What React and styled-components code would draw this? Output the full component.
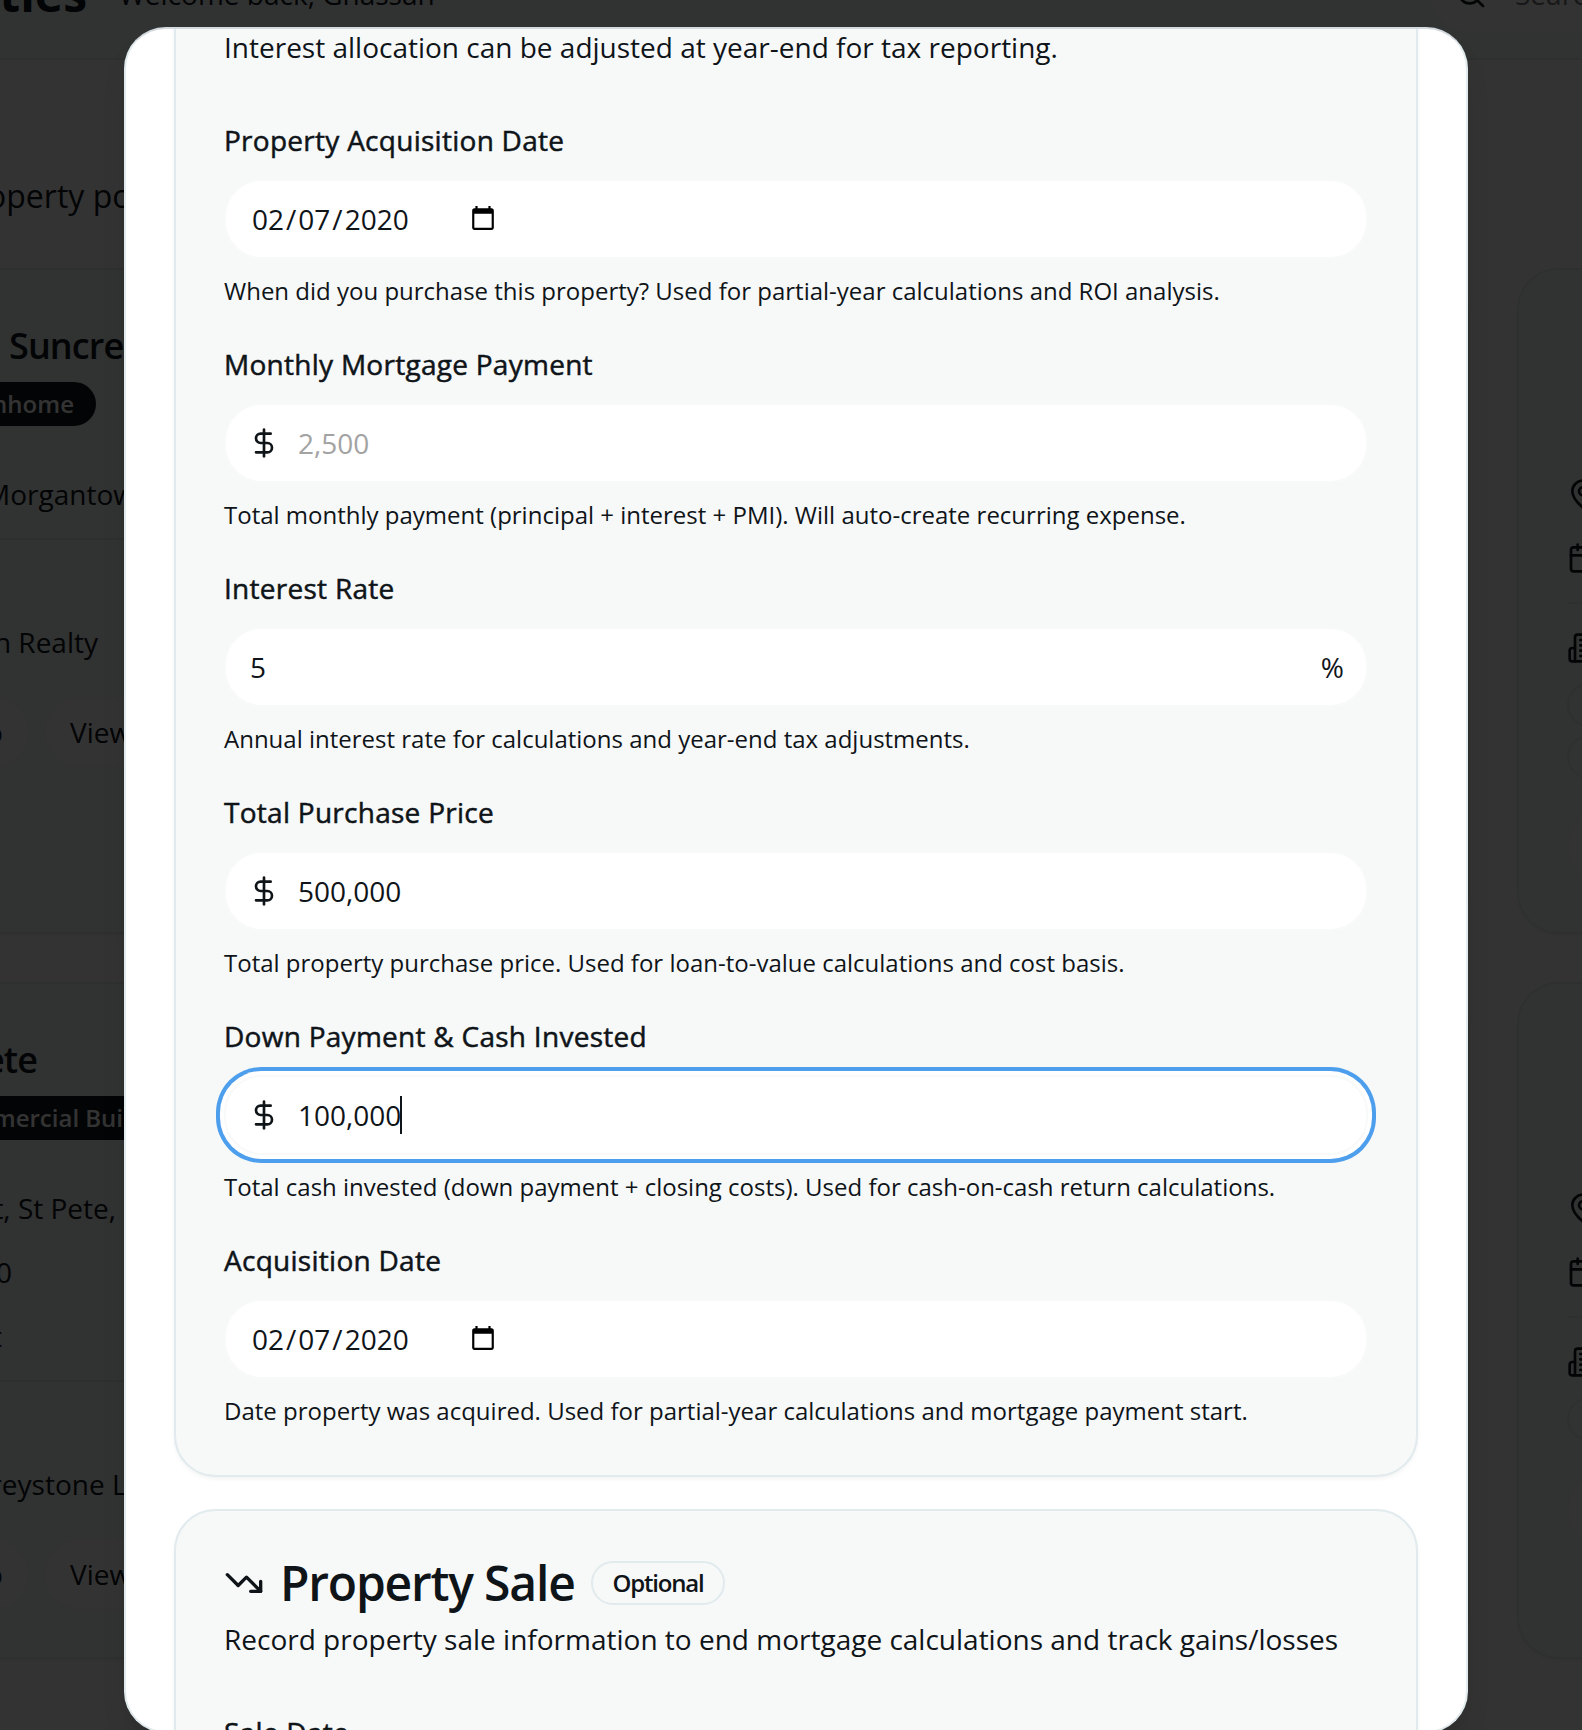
import React from "react";
import styled, { createGlobalStyle, css } from "styled-components";
import { DollarSign, TrendingDown, MapPin, Calendar, Search } from "lucide-react";

const GlobalStyle = createGlobalStyle`
  *, *::before, *::after { box-sizing: border-box; }
  body {
    margin: 0;
    background: #ffffff;
    color: #0f1419;
    font-family: "Open Sans", "Noto Sans", sans-serif;
    font-size: 32px;
    line-height: 48px;
  }
  p, h1, h2, h3 { margin: 0; }
`;

const Screen = styled.div`
  position: relative;
  width: 1582px;
  height: 1730px;
  overflow: hidden;
`;

/* ---------- page behind the dialog ---------- */

const Header = styled.header`
  display: flex;
  align-items: center;
  height: 130px;
  margin-top: -70px;
  background: #f5f9f7;
  border-bottom: 2px solid #e6ecec;
  white-space: nowrap;
`;

const PageTitle = styled.h1`
  display: flex;
  justify-content: flex-end;
  flex: none;
  width: 87px;
  font-size: 48px;
  font-weight: 700;
`;

const Welcome = styled.span`
  margin-left: 32px;
  font-size: 28px;
`;

const SearchBox = styled.div`
  display: flex;
  flex: none;
  align-items: center;
  gap: 28px;
  width: 400px;
  height: 76px;
  margin-left: auto;
  margin-right: -249px;
  padding-left: 24px;
  border-radius: 38px;
  background: #ffffff;
  color: #72767a;
  font-size: 28px;
  svg { color: #0f1419; }
`;

const Intro = styled.p`
  height: 208px;
  padding-top: 112px;
  margin-left: -13px;
  white-space: nowrap;
`;

const Grid = styled.div`
  display: grid;
  grid-template-columns: 1519px 400px;
  grid-template-rows: 666px 677px;
  gap: 48px;
  margin-left: -50px;
`;

const PropertyCard = styled.article`
  display: flex;
  flex-direction: column;
  align-items: flex-start;
  padding: 48px;
  border: 2px solid #e6ecec;
  border-radius: 41.6px;
  background: #f5f9f7;
  box-shadow: 0 2px 4px rgba(0, 0, 0, 0.05);
  font-size: 28px;
  line-height: 40px;
  white-space: nowrap;
`;

const anchored = css`
  margin-top: ${(p) => p.$gap || 0}px;
  margin-left: ${(p) => p.$start || 0}px;
  ${(p) =>
    p.$end &&
    css`
      display: flex;
      justify-content: flex-end;
      width: ${p.$end}px;
    `}
`;

const Line = styled.div`
  flex: none;
  ${anchored}
`;

const PropertyName = styled(Line)`
  height: 54px;
  font-size: 36px;
  line-height: 56px;
  font-weight: 600;
  letter-spacing: -0.025em;
`;

const TypeBadge = styled.span`
  display: block;
  flex: none;
  padding: 4px 20px;
  border: 2px solid #0f1419;
  border-radius: 22px;
  background: #0f1419;
  color: #ffffff;
  font-size: 24px;
  font-weight: 600;
  line-height: 32px;
`;

const Rule = styled.div`
  flex: none;
  align-self: stretch;
  height: 2px;
  margin-top: ${(p) => p.$gap}px;
  background: #e6ecec;
`;

const Actions = styled.div`
  display: flex;
  gap: 16px;
  margin-top: ${(p) => p.$gap}px;
`;

const FirstAction = styled.div`
  display: flex;
  justify-content: flex-end;
  width: 29px;
  margin-right: -1px;
`;

const ActionButton = styled.div`
  flex: none;
  min-width: ${(p) => p.$min || 0}px;
  height: 72px;
  padding: 14px 24px;
  border: 2px solid #fbfbfb;
  border-radius: 37.6px;
  background: #ffffff;
`;

const IconSlot = styled.div`
  flex: none;
  height: 32px;
  margin-top: ${(p) => p.$gap}px;
  line-height: 0;
`;

const OutlineChip = styled.div`
  flex: none;
  width: 140px;
  height: 44px;
  margin-top: ${(p) => p.$gap}px;
  border: 2px solid #e6ecec;
  border-radius: 22px;
`;

function BuildingIcon() {
  return (
    <svg width="32" height="32" viewBox="0 0 24 24" fill="none" stroke="currentColor" strokeWidth="2" strokeLinecap="round" strokeLinejoin="round">
      <path d="M6 22V4a2 2 0 0 1 2-2h8a2 2 0 0 1 2 2v18Z" />
      <path d="M6 12H4a2 2 0 0 0-2 2v6a2 2 0 0 0 2 2h2" />
      <path d="M18 9h2a2 2 0 0 1 2 2v9a2 2 0 0 1-2 2h-2" />
      <path d="M10 6h4M10 10h4M10 14h4M10 18h4" />
    </svg>
  );
}

function CardActions({ gap }) {
  return (
    <Actions $gap={gap}>
      <FirstAction>
        <ActionButton>Map</ActionButton>
      </FirstAction>
      <ActionButton>View</ActionButton>
    </Actions>
  );
}

function SideCard({ chips, actionGap }) {
  return (
    <PropertyCard>
      <IconSlot $gap={160}><MapPin size={32} /></IconSlot>
      <IconSlot $gap={32}><Calendar size={32} /></IconSlot>
      <Rule $gap={28} />
      <IconSlot $gap={28}><BuildingIcon /></IconSlot>
      {chips.map((gap, i) => (
        <OutlineChip key={i} $gap={gap} />
      ))}
      <Actions $gap={actionGap}>
        <ActionButton $min={160} />
      </Actions>
    </PropertyCard>
  );
}

function Page() {
  return (
    <div>
      <Header>
        <PageTitle>Properties</PageTitle>
        <Welcome>Welcome back, Ghassan</Welcome>
        <SearchBox>
          <Search size={32} />
          <span>Search</span>
        </SearchBox>
      </Header>
      <Intro>operty portfolio</Intro>
      <Grid>
        <PropertyCard>
          <PropertyName $start={9}>Suncrest</PropertyName>
          <Line $gap={10} $end={96}><TypeBadge>Townhome</TypeBadge></Line>
          <Line $gap={48} $start={-15}>Morgantown</Line>
          <Rule $gap={24} />
          <Line $gap={82} $end={98}>n Realty</Line>
          <CardActions gap={34} />
        </PropertyCard>
        <SideCard chips={[19, 8]} actionGap={32} />
        <PropertyCard>
          <PropertyName $end={37}>St Pete</PropertyName>
          <Line $gap={10} $start={-82}><TypeBadge>Commercial Building</TypeBadge></Line>
          <Line $gap={48} $end={116}>t, St Pete,</Line>
          <Line $gap={24} $end={12}>00</Line>
          <Line $gap={24} $end={2}>t</Line>
          <Rule $gap={24} />
          <Line $gap={82} $start={-30}>Greystone LLC</Line>
          <CardActions gap={34} />
        </PropertyCard>
        <SideCard chips={[19]} actionGap={33} />
      </Grid>
    </div>
  );
}

/* ---------- dialog ---------- */

const Overlay = styled.div`
  position: absolute;
  inset: 0;
  display: flex;
  justify-content: center;
  align-items: flex-start;
  padding: 27px 0 0 10px;
  background: rgba(0, 0, 0, 0.8);
`;

const Dialog = styled.div`
  display: flex;
  flex-direction: column;
  gap: 32px;
  width: 1344px;
  height: 1706px;
  padding: 0 48px;
  border: 2px solid #e1eaed;
  border-top-color: #d3dadd;
  border-radius: 41.6px;
  background: #ffffff;
  box-shadow: 0 20px 30px -6px rgba(0, 0, 0, 0.1), 0 8px 12px -8px rgba(0, 0, 0, 0.1);
  overflow: hidden;
`;

const Section = styled.section`
  flex: none;
  padding: 48px;
  border: 2px solid #e1eaed;
  border-radius: 41.6px;
  background: #f7f9f8;
  box-shadow: 0 2px 4px rgba(0, 0, 0, 0.05);
  ${(p) => p.$scrolled && "margin-top: -60px; padding-top: 56px;"}
`;

const Description = styled.p`
  margin-bottom: 48px;
  font-size: 28px;
  line-height: 40px;
`;

const Fields = styled.div`
  display: flex;
  flex-direction: column;
  gap: 32px;
`;

const Field = styled.div`
  display: flex;
  flex-direction: column;
  gap: 16px;
`;

const LabelRow = styled.div`
  height: 48px;
`;

const Label = styled.label`
  font-size: 28px;
  font-weight: 500;
  line-height: 28px;
  letter-spacing: 0.27px;
  -webkit-text-stroke: 0.5px currentColor;
`;

const InputBox = styled.div`
  display: flex;
  align-items: center;
  height: 80px;
  padding: 0 22px;
  border: 2px solid #f8f9f9;
  border-radius: 37.6px;
  background: #ffffff;
  font-size: 28px;
  line-height: 40px;
  ${(p) => p.$focused && "box-shadow: 0 0 0 4px #ffffff, 0 0 0 8px #4d9eec;"}
`;

const Prefix = styled.span`
  display: flex;
  width: 50px;
`;

const Value = styled.span`
  color: ${(p) => (p.$placeholder ? "#a3a3a3" : "inherit")};
  padding-left: ${(p) => p.$inset || 0}px;
`;

const Caret = styled.span`
  width: 2px;
  height: 38px;
  margin-left: -1px;
  background: #0f1419;
`;

const Suffix = styled.span`
  margin-left: auto;
`;

const DateValue = styled.span`
  display: flex;
  width: 222px;
  padding-left: 2px;
`;

const DatePart = styled.span`
  padding: 0 2px;
`;

const Helper = styled.p`
  font-size: 24px;
  line-height: 32px;
`;

const TitleRow = styled.h3`
  display: flex;
  align-items: center;
  gap: 16px;
  height: 48px;
  margin-bottom: 12px;
  font-size: 48px;
  font-weight: 600;
  line-height: 48px;
  letter-spacing: -0.025em;
`;

const OptionalBadge = styled.span`
  padding: 4px 19px 4px 20px;
  border: 2px solid #e1eaed;
  border-radius: 22px;
  font-size: 24px;
  line-height: 32px;
`;

const PickerSvg = styled.svg`
  flex: none;
  margin-bottom: 2px;
`;

function PickerIcon() {
  return (
    <PickerSvg width="26" height="26" viewBox="0 0 24 24" fill="#000000">
      <path d="M20 3h-1V1h-2v2H7V1H5v2H4c-1.1 0-2 .9-2 2v16c0 1.1.9 2 2 2h16c1.1 0 2-.9 2-2V5c0-1.1-.9-2-2-2zm0 18H4V8h16v13z" />
    </PickerSvg>
  );
}

function DateInput({ value }) {
  const [month, day, year] = value.split("/");
  return (
    <InputBox>
      <DateValue>
        <DatePart>{month}</DatePart>/<DatePart>{day}</DatePart>/<DatePart>{year}</DatePart>
      </DateValue>
      <PickerIcon />
    </InputBox>
  );
}

function MoneyInput({ value, placeholder, focused }) {
  return (
    <InputBox $focused={focused}>
      <Prefix><DollarSign size={32} /></Prefix>
      <Value $placeholder={!value}>{value || placeholder}</Value>
      {focused && <Caret />}
    </InputBox>
  );
}

function FormField({ label, helper, children }) {
  return (
    <Field>
      <LabelRow><Label>{label}</Label></LabelRow>
      {children}
      {helper && <Helper>{helper}</Helper>}
    </Field>
  );
}

export default function App() {
  return (
    <>
      <GlobalStyle />
      <Screen>
        <Page />
        <Overlay>
          <Dialog role="dialog">
            <Section $scrolled>
              <Description>Interest allocation can be adjusted at year-end for tax reporting.</Description>
              <Fields>
                <FormField label="Property Acquisition Date" helper="When did you purchase this property? Used for partial-year calculations and ROI analysis.">
                  <DateInput value="02/07/2020" />
                </FormField>
                <FormField label="Monthly Mortgage Payment" helper="Total monthly payment (principal + interest + PMI). Will auto-create recurring expense.">
                  <MoneyInput placeholder="2,500" />
                </FormField>
                <FormField label="Interest Rate" helper="Annual interest rate for calculations and year-end tax adjustments.">
                  <InputBox>
                    <Value $inset={2}>5</Value>
                    <Suffix>%</Suffix>
                  </InputBox>
                </FormField>
                <FormField label="Total Purchase Price" helper="Total property purchase price. Used for loan-to-value calculations and cost basis.">
                  <MoneyInput value="500,000" />
                </FormField>
                <FormField label="Down Payment &amp; Cash Invested" helper="Total cash invested (down payment + closing costs). Used for cash-on-cash return calculations.">
                  <MoneyInput value="100,000" focused />
                </FormField>
                <FormField label="Acquisition Date" helper="Date property was acquired. Used for partial-year calculations and mortgage payment start.">
                  <DateInput value="02/07/2020" />
                </FormField>
              </Fields>
            </Section>
            <Section>
              <TitleRow>
                <TrendingDown size={40} />
                Property Sale
                <OptionalBadge>Optional</OptionalBadge>
              </TitleRow>
              <Description>Record property sale information to end mortgage calculations and track gains/losses</Description>
              <FormField label="Sale Date" />
            </Section>
          </Dialog>
        </Overlay>
      </Screen>
    </>
  );
}
